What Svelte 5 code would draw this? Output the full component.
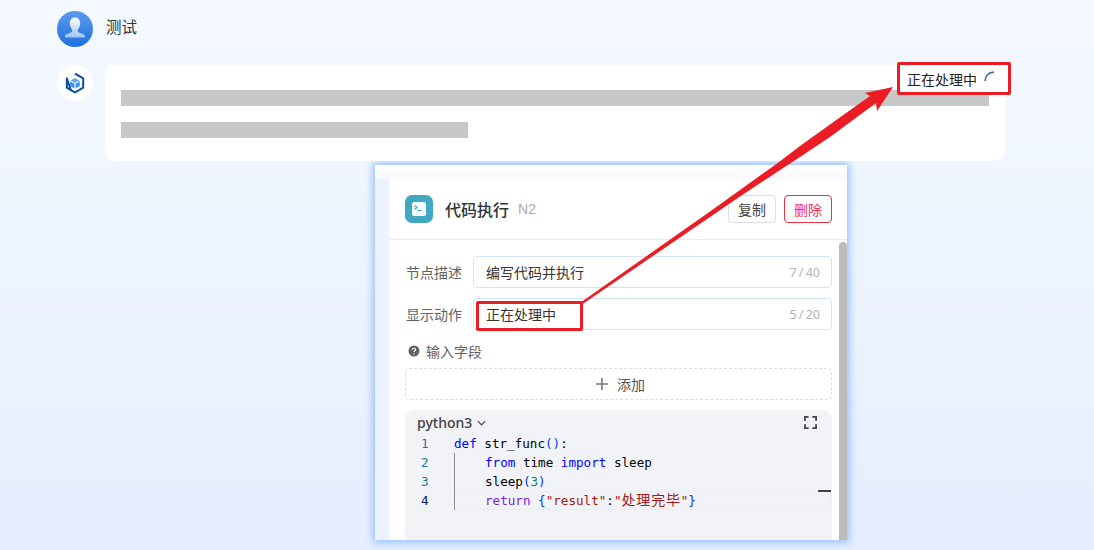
<script>
  const code = [
    { n: 1, cur: false },
    { n: 2, cur: false },
    { n: 3, cur: false },
    { n: 4, cur: true }
  ];
</script>

<div class="page">
  <div class="user">
    <svg class="avatar" viewBox="0 0 36 36">
      <defs>
        <linearGradient id="ag" x1="0" y1="0" x2="0" y2="1">
          <stop offset="0" stop-color="#5b9cf0" />
          <stop offset="1" stop-color="#1f6fdc" />
        </linearGradient>
        <linearGradient id="ap" x1="0" y1="0" x2="0" y2="1">
          <stop offset="0" stop-color="#ffffff" />
          <stop offset="1" stop-color="#9cc4f6" />
        </linearGradient>
        <clipPath id="ac"><circle cx="18" cy="18" r="18" /></clipPath>
      </defs>
      <circle cx="18" cy="18" r="18" fill="url(#ag)" />
      <g clip-path="url(#ac)">
        <path d="M18 6.500c3.300 0 5.200 2.500 5.200 5.800 0 2.600-1 4.700-2.400 6v2c0 1 3 1.800 5.600 3 1.200.6 1.600 1.600 1.600 3.200H8c0-1.600.4-2.600 1.600-3.200 2.600-1.200 5.600-2 5.600-3v-2c-1.400-1.300-2.400-3.400-2.400-6 0-3.300 1.900-5.800 5.200-5.800z" fill="url(#ap)" />
      </g>
    </svg>
    <span class="uname">测试</span>
  </div>

  <div class="answer">
    <div class="logo">
      <svg viewBox="0 0 22 24" width="20" height="22">
        <path d="M11 1.800 20 6.900V17.100L15.500 19.800M6.500 19.800 2 17.100V6.900z" fill="none" stroke="#0f4c9c" stroke-width="2.200" stroke-linejoin="round" />
        <path d="M6.500 19.800 11 22.300 15.500 19.800" fill="none" stroke="#0f4c9c" stroke-width="2.200" />
        <path d="M11 6.500 16 9.200 11 12 6 9.200z" fill="#63a9f7" />
        <path d="M5.700 10.200 10.400 12.900V18L5.700 15.300z" fill="#3a8ff0" />
        <path d="M16.300 10.200 11.600 12.900V18L16.300 15.300z" fill="#3a8ff0" />
      </svg>
    </div>
    <div class="card">
      <div class="bar full"></div>
      <div class="bar short"></div>
    </div>
  </div>

  <div class="panel">
    <div class="strip"></div>
    <div class="inner">
      <div class="gutter"></div>
      <div class="main">
        <header class="head">
          <div class="node-ic">
            <svg viewBox="0 0 28 28" width="28" height="28">
              <rect width="28" height="28" rx="7" fill="#3fa9c2" />
              <rect x="7" y="7" width="14" height="14" rx="2" fill="#f4fbfd" />
              <path d="M9.500 10.500 12 12.500 9.500 14.500" fill="none" stroke="#3fa9c2" stroke-width="1.100" />
              <path d="M12.500 15.500h4" stroke="#3fa9c2" stroke-width="1.100" />
            </svg>
          </div>
          <span class="title">代码执行</span>
          <span class="nid">N2</span>
          <span class="sp"></span>
          <button class="btn">复制</button>
          <button class="btn del">删除</button>
        </header>
        <div class="body">
          <div class="content">
            <div class="field first">
              <span class="label">节点描述</span>
              <div class="input"><span>编写代码并执行</span><em>7 / 40</em></div>
            </div>
            <div class="field">
              <span class="label">显示动作</span>
              <div class="input"><span>正在处理中</span><em>5 / 20</em></div>
            </div>
            <div class="inputs-title">
              <svg viewBox="0 0 12 12" width="12" height="12">
                <circle cx="6" cy="6" r="5.500" fill="#606266" />
                <path d="M4.300 4.700c0-1 .8-1.500 1.700-1.500s1.700.5 1.700 1.400c0 1.200-1.700 1.200-1.700 2.500" fill="none" stroke="#fff" stroke-width="1.100" />
                <circle cx="6" cy="8.900" r=".7" fill="#fff" />
              </svg>
              <span>输入字段</span>
            </div>
            <div class="add">
              <svg viewBox="0 0 12 12" width="12" height="12"><path d="M6 0v12M0 6h12" stroke="#777" stroke-width="1.500" /></svg>
              <span>添加</span>
            </div>
            <div class="editor">
              <div class="ed-head">
                <span class="lang">python3</span>
                <svg class="chev" viewBox="0 0 10 6" width="9" height="6"><path d="M1 1l4 4 4-4" fill="none" stroke="#444" stroke-width="1.300" /></svg>
                <span class="sp"></span>
                <svg class="full-ic" viewBox="0 0 14 14" width="13" height="13">
                  <path d="M1 5V1h4M9 1h4v4M13 9v4H9M5 13H1V9" fill="none" stroke="#43464d" stroke-width="2" />
                </svg>
              </div>
              <div class="code">
                <div class="nums">
                  {#each code as c}
                    <div class:cur={c.cur}>{c.n}</div>
                  {/each}
                </div>
                <div class="lines">
                  <div class="ln"><i class="k">def</i> str_func<i class="b">()</i>:</div>
                  <div class="ln ind"><i class="k">from</i> time <i class="k">import</i> sleep</div>
                  <div class="ln ind">sleep<i class="b">(</i><i class="g">3</i><i class="b">)</i></div>
                  <div class="ln ind now"><i class="p">return</i> <i class="b">{'{'}</i><i class="s">"result"</i>:<i class="s">"<i class="cjk">处理完毕</i>"</i><i class="b">{'}'}</i></div>
                  <span class="guide"></span>
                  <span class="mini"></span>
                </div>
              </div>
            </div>
          </div>
          <div class="scroll"></div>
        </div>
      </div>
    </div>
  </div>

  <div class="callout"><span>正在处理中</span>
    <svg class="spin" viewBox="0 0 12 12" width="12" height="12"><path d="M1.200 10C1.200 5 4.500 1.500 10 1.200" fill="none" stroke="#3a6ea8" stroke-width="1.800" /></svg>
  </div>
  <div class="mark"></div>
  <svg class="arrow" viewBox="0 0 1094 550" width="1094" height="550">
    <path d="M893 87 865 93 870 96 830 124.500 800 146 777 163.500 740 190 710 211.500 582 301.500 582 304.500 710 217 740 196.500 777 172 800 157 830 137 876 103 877 111z" fill="#ec1c24" />
  </svg>
</div>

<style>
  :global(body) {
    margin: 0;
  }
  .page {
    position: relative;
    box-sizing: border-box;
    width: 1094px;
    height: 550px;
    overflow: hidden;
    padding: 11px 0 0 57px;
    background: linear-gradient(180deg, #f5f9ff 0%, #e5eeff 100%);
    font-family: "Noto Sans CJK SC", "Noto Sans", sans-serif;
    font-size: 14px;
    color: #333;
  }
  .user {
    display: flex;
    align-items: center;
    gap: 13px;
    height: 36px;
  }
  .avatar {
    width: 36px;
    height: 36px;
  }
  .uname {
    color: #333;
    font-size: 15.500px;
    line-height: 20px;
    margin-top: -6px;
  }
  .answer {
    display: flex;
    gap: 12px;
    margin-top: 18px;
  }
  .logo {
    width: 36px;
    height: 36px;
    border-radius: 50%;
    background: #fff;
    display: flex;
    align-items: center;
    justify-content: center;
  }
  .card {
    box-sizing: border-box;
    width: 900px;
    height: 96px;
    background: #fff;
    border-radius: 10px;
    padding: 25px 16px 0;
  }
  .bar {
    height: 16px;
    background: #c8c8c8;
  }
  .short {
    width: 347px;
    margin-top: 16px;
  }
  .panel {
    box-sizing: border-box;
    width: 472px;
    height: 375px;
    margin: 4px 0 0 318px;
    background: #fff;
    box-shadow: 0 0 8px 2px #8fbcf8;
    display: flex;
    flex-direction: column;
    overflow: hidden;
  }
  .strip {
    height: 14px;
    background: linear-gradient(180deg, #fff, #f6f8fd);
    flex: none;
  }
  .inner {
    flex: 1;
    min-height: 0;
    display: flex;
  }
  .gutter {
    width: 14px;
    background: #ecf3ff;
    flex: none;
  }
  .main {
    flex: 1;
    min-width: 0;
    display: flex;
    flex-direction: column;
    background: #fff;
  }
  .head {
    box-sizing: border-box;
    flex: none;
    height: 61px;
    border-bottom: 1px solid #e8ebf0;
    display: flex;
    align-items: center;
    padding: 0 15px 0 16px;
  }
  .node-ic {
    width: 28px;
    height: 28px;
    line-height: 0;
  }
  .title {
    margin-left: 12px;
    font-size: 16px;
    font-weight: 500;
    color: #333;
  }
  .nid {
    margin-left: 9px;
    font-size: 14px;
    color: #a8abb2;
    font-family: "Liberation Sans", sans-serif;
  }
  .sp {
    flex: 1;
  }
  .btn {
    box-sizing: border-box;
    width: 48px;
    height: 28px;
    padding: 0;
    margin-left: 8px;
    background: #fff;
    border: 1px solid #dcdfe6;
    border-radius: 4px;
    font: 14px "Noto Sans CJK SC", sans-serif;
    color: #444;
  }
  .btn.del {
    border-color: #f0303c;
    color: #f0305a;
  }
  .body {
    flex: 1;
    min-height: 0;
    display: flex;
  }
  .content {
    flex: 1;
    min-width: 0;
    padding-left: 16px;
    padding-right: 7px;
  }
  .field {
    display: flex;
    align-items: center;
    height: 32px;
    margin-top: 10px;
  }
  .field.first {
    margin-top: 16px;
  }
  .label {
    box-sizing: border-box;
    width: 68px;
    padding-left: 1px;
    flex: none;
    color: #606266;
    font-size: 14px;
  }
  .input {
    box-sizing: border-box;
    flex: 1;
    height: 32px;
    border: 1px solid #d5e2f5;
    border-radius: 4px;
    display: flex;
    align-items: center;
    justify-content: space-between;
    padding: 0 11px 0 12px;
    font-size: 14px;
    color: #333;
  }
  .input em {
    font-style: normal;
    font-size: 12.500px;
    word-spacing: -1px;
    color: #b0b3b8;
    font-family: "Noto Sans", sans-serif;
  }
  .inputs-title {
    display: flex;
    align-items: center;
    gap: 6px;
    height: 20px;
    margin-top: 11px;
    padding-left: 3px;
    color: #606266;
    font-size: 14px;
  }
  .add {
    box-sizing: border-box;
    height: 32px;
    margin-top: 7px;
    padding-left: 4px;
    border: 1px dashed #dcdfe6;
    border-radius: 4px;
    display: flex;
    align-items: center;
    justify-content: center;
    gap: 9px;
    font-size: 14px;
    color: #555;
  }
  .editor {
    margin-top: 10px;
    height: 140px;
    background: #f2f3f7;
    border-radius: 10px 10px 0 0;
    padding-top: 4px;
  }
  .ed-head {
    display: flex;
    align-items: center;
    height: 18px;
    padding: 0 15px 0 12px;
  }
  .lang {
    font-family: "Noto Sans", sans-serif;
    font-size: 14px;
    font-weight: 500;
    color: #3c3f46;
    margin-top: -2px;
  }
  .chev {
    margin-left: 5px;
  }
  .full-ic {
    margin-top: -2px;
  }
  .code {
    display: flex;
    margin-top: 2px;
    font-family: "DejaVu Sans Mono", "Noto Sans CJK SC", monospace;
    font-size: 12.600px;
    line-height: 19px;
  }
  .nums {
    width: 49px;
    flex: none;
    padding-left: 16px;
    box-sizing: border-box;
    color: #237893;
  }
  .nums .cur {
    color: #0b216f;
  }
  .lines {
    position: relative;
    flex: 1;
    margin-right: 1px;
    color: #000;
  }
  .ln {
    height: 19px;
    white-space: pre;
  }
  .ind {
    padding-left: 31px;
  }
  .now {
    box-shadow: inset 0 0 0 1px #ecedee;
  }
  .lines i {
    font-style: normal;
  }
  .lines .cjk {
    font-size: 14px;
    letter-spacing: 0.800px;
  }
  .k {
    color: #0000ff;
  }
  .p {
    color: #7a22e0;
  }
  .b {
    color: #0431fa;
  }
  .g {
    color: #098658;
  }
  .s {
    color: #a31515;
  }
  .guide {
    position: absolute;
    left: 0;
    top: 19px;
    width: 1px;
    height: 57px;
    background: #8e8e8e;
  }
  .mini {
    position: absolute;
    right: 0;
    top: 56px;
    width: 13px;
    height: 2px;
    background: #444;
  }
  .scroll {
    width: 8px;
    flex: none;
    margin-top: 2px;
    background: #bcbcbc;
    border-radius: 4px 4px 0 0;
  }
  .callout {
    position: absolute;
    box-sizing: border-box;
    left: 897px;
    top: 62px;
    width: 114px;
    height: 33px;
    border: 3px solid #ec1c24;
    border-radius: 2px;
    background: #fff;
    display: flex;
    align-items: center;
    padding-left: 7px;
    font-size: 14px;
    color: #222;
  }
  .spin {
    display: block;
    margin: -4px 0 0 7px;
  }
  .mark {
    position: absolute;
    box-sizing: border-box;
    left: 476px;
    top: 301px;
    width: 107px;
    height: 30px;
    border: 3px solid #ec1c24;
    border-radius: 2px;
  }
  .arrow {
    position: absolute;
    left: 0;
    top: 0;
    pointer-events: none;
  }
</style>
